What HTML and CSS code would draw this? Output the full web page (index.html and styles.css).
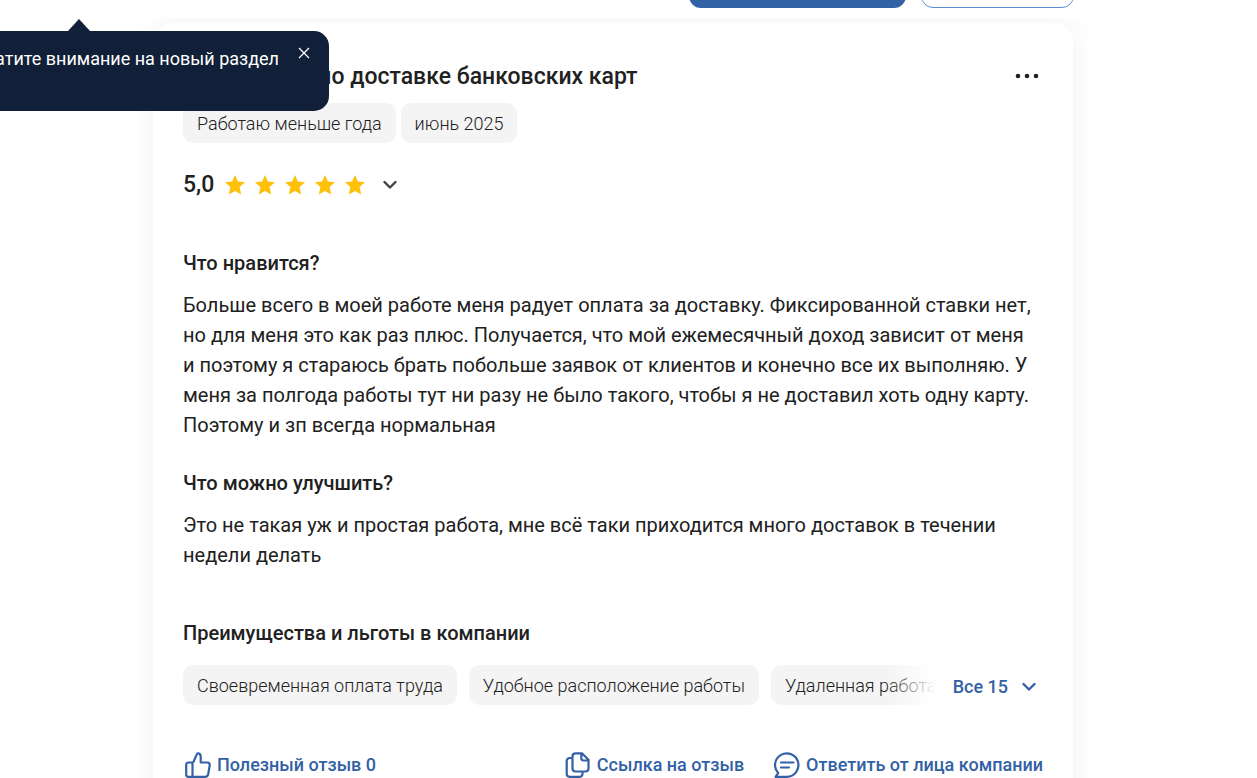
FILE: index.html
```
<!DOCTYPE html>
<html lang="ru">
<head>
<meta charset="UTF-8">
<meta name="viewport" content="width=device-width, initial-scale=1.0">
<title>Отзыв о работе</title>
<link rel="stylesheet" href="styles.css">
</head>
<body>

<div class="page">
<div class="toolbar">
<button class="button button-main" type="button" aria-label="Оставить отзыв"></button>
<button class="button button-outline" type="button" aria-label="Фильтры"></button>
</div>

<main class="reviews">
<article class="card">
<header class="card-header">
<h2 class="card-title">Специалист по доставке банковских карт</h2>
<button class="menu-button" type="button" aria-label="Меню">
<svg width="24" height="6" viewBox="0 0 24 6" fill="currentColor"><circle cx="3" cy="3" r="2.3"/><circle cx="12" cy="3" r="2.3"/><circle cx="21" cy="3" r="2.3"/></svg>
</button>
</header>

<div class="tags">
<span class="tag">Работаю меньше года</span>
<span class="tag">июнь 2025</span>
</div>

<div class="rating">
<span class="rating-value">5,0</span>
<div class="stars">
<svg class="star" viewBox="0 0 20 20"><path d="M10 0l2.9 6.6 7.1.7-5.4 4.7 1.6 7.6-6.2-3.7-6.2 3.7L5.400 12 0 7.3l7.100-.7z"/></svg>
<svg class="star" viewBox="0 0 20 20"><path d="M10 0l2.9 6.6 7.1.7-5.4 4.7 1.6 7.6-6.2-3.7-6.2 3.7L5.400 12 0 7.3l7.100-.7z"/></svg>
<svg class="star" viewBox="0 0 20 20"><path d="M10 0l2.9 6.6 7.1.7-5.4 4.7 1.6 7.6-6.2-3.7-6.2 3.7L5.400 12 0 7.3l7.100-.7z"/></svg>
<svg class="star" viewBox="0 0 20 20"><path d="M10 0l2.9 6.6 7.1.7-5.4 4.7 1.6 7.6-6.2-3.7-6.2 3.7L5.400 12 0 7.3l7.100-.7z"/></svg>
<svg class="star" viewBox="0 0 20 20"><path d="M10 0l2.9 6.6 7.1.7-5.4 4.7 1.6 7.6-6.2-3.7-6.2 3.7L5.400 12 0 7.3l7.100-.7z"/></svg>
</div>
<button class="rating-toggle" type="button" aria-label="Показать оценки">
<svg class="chevron" viewBox="0 0 14 10"><path d="M1.500 2L7 7.500 12.500 2"/></svg>
</button>
</div>

<section class="answer">
<h3>Что нравится?</h3>
<p>Больше всего в моей работе меня радует оплата за доставку. Фиксированной ставки нет, но для меня это как раз плюс. Получается, что мой ежемесячный доход зависит от меня и поэтому я стараюсь брать побольше заявок от клиентов и конечно все их выполняю. У меня за полгода работы тут ни разу не было такого, чтобы я не доставил хоть одну карту. Поэтому и зп всегда нормальная</p>
</section>

<section class="answer">
<h3>Что можно улучшить?</h3>
<p>Это не такая уж и простая работа, мне всё таки приходится много доставок в течении недели делать</p>
</section>

<section class="benefits">
<h3>Преимущества и льготы в компании</h3>
<div class="benefits-row">
<div class="benefits-list">
<span class="tag">Своевременная оплата труда</span>
<span class="tag">Удобное расположение работы</span>
<span class="tag">Удаленная работа</span>
</div>
<button class="show-all" type="button">Все 15
<svg class="chevron" viewBox="0 0 14 10"><path d="M1.500 2L7 7.500 12.500 2"/></svg>
</button>
</div>
</section>

<footer class="actions">
<button class="action action-like" type="button">
<svg class="icon" viewBox="0 0 26 26"><path d="M7.500 10.500h-4a2.300 2.300 0 0 0-2.300 2.300v9.700a2.300 2.300 0 0 0 2.300 2.300h16.700a3 3 0 0 0 3-2.600l1.500-9a2.300 2.300 0 0 0-2.300-2.700h-6.700v-6c0-2-1-3.200-2.600-3.200-.6 0-1 .3-1.200.8L8.500 9.800c-.2.500-.5.700-1 .7zv14.300"/></svg>
Полезный отзыв 0
</button>
<button class="action" type="button">
<svg class="icon" viewBox="0 0 26 26"><path d="M7.500 6H4.700a3 3 0 0 0-3 3v12.800a3 3 0 0 0 3 3h9.800a3 3 0 0 0 3-3v-2.300M10.500 1.300H17l6.500 6.500v8.700a3 3 0 0 1-3 3h-10a3 3 0 0 1-3-3V4.300a3 3 0 0 1 3-3zM16.300 1.300v5a2.200 2.200 0 0 0 2.200 2.200h5"/></svg>
Ссылка на отзыв
</button>
<button class="action" type="button">
<svg class="icon" viewBox="0 0 26 26"><path d="M1.500 24.800l2.700-3.700A11.700 11.700 0 1 1 13 24.800zM7 10.500h12.500M7 15.500h8"/></svg>
Ответить от лица компании
</button>
</footer>
</article>
</main>
</div>

<div class="tooltip" role="dialog">
<p class="tooltip-text">Обратите внимание на новый раздел</p>
<button class="tooltip-close" type="button" aria-label="Закрыть">
<svg width="12" height="12" viewBox="0 0 12 12"><path d="M1 1l10 10M11 1L1 11"/></svg>
</button>
</div>

</body>
</html>
```

FILE: styles.css
```
* {
box-sizing: border-box;
}

body {
margin: 0;
background-color: #fff;
color: #212121;
font-family: Roboto, Arial, sans-serif;
font-size: 20px;
line-height: 30px;
overflow-x: hidden;
}

button {
padding: 0;
border: none;
background: none;
color: inherit;
font: inherit;
cursor: pointer;
}

svg {
display: block;
flex-shrink: 0;
}

h2, h3, p {
margin: 0;
}

.page {
padding-right: 31px;
}

/* Кнопки над списком отзывов */
.toolbar {
display: flex;
justify-content: flex-end;
align-items: flex-end;
gap: 15px;
max-width: 921px;
height: 8px;
margin: 0 auto;
overflow: hidden;
}

.button {
flex-shrink: 0;
height: 50px;
border-radius: 12px;
}

.button-main {
width: 217px;
background-color: #3361a5;
}

.button-outline {
width: 153px;
border: 1px solid #5b8bd8;
}

.reviews {
margin-top: 10px;
padding: 5px 0 0;
overflow: hidden;
}

.card {
max-width: 920px;
margin: 0 auto;
padding: 38px 30px 30px;
border-radius: 20px;
background-color: #fff;
box-shadow: 0 0 30px rgba(0, 0, 0, 0.06);
}

.card-header {
display: flex;
justify-content: space-between;
height: 32px;
padding-right: 4px;
}

.card-title {
font-size: 23px;
font-weight: 500;
line-height: 32px;
}

.menu-button {
height: 30px;
}

.tags {
display: flex;
gap: 5px;
margin-top: 10px;
}

.tag {
flex-shrink: 0;
padding: 6px 14px 4px;
border-radius: 10px;
background-color: #f4f4f4;
color: #212121;
font-size: 18px;
font-weight: 300;
white-space: nowrap;
}

/* Оценка */
.rating {
display: flex;
align-items: center;
margin-top: 27px;
}

.rating-value {
font-size: 23px;
font-weight: 500;
}

.stars {
display: flex;
gap: 10px;
margin-left: 11px;
}

.star {
width: 20px;
height: 20px;
fill: #ffc107;
}

.rating-toggle {
margin-left: 18px;
color: #424242;
}

.chevron {
width: 14px;
height: 10px;
fill: none;
stroke: currentColor;
stroke-width: 2.4;
stroke-linecap: round;
stroke-linejoin: round;
}

h3 {
font-size: 20px;
font-weight: 500;
}

.answer {
margin-top: 28px;
}

.answer p {
margin-top: 12px;
padding-right: 8px;
}

.rating + .answer {
margin-top: 48px;
}

/* Льготы */
.benefits {
margin-top: 48px;
}

.benefits-row {
display: flex;
align-items: center;
gap: 18px;
margin-top: 17px;
padding-right: 7px;
}

.benefits-list {
position: relative;
display: flex;
flex: 1;
gap: 12px;
min-width: 0;
overflow: hidden;
}

.benefits-list::after {
content: "";
position: absolute;
top: 0;
right: 0;
width: 50px;
height: 100%;
background: linear-gradient(to right, rgba(255, 255, 255, 0), #fff);
}

.show-all {
display: flex;
align-items: center;
gap: 14px;
padding-top: 4px;
color: #3361a5;
font-size: 18px;
font-weight: 500;
}

/* Действия с отзывом */
.actions {
display: flex;
gap: 30px;
margin-top: 45px;
padding-left: 2px;
}

.action {
display: flex;
align-items: center;
gap: 6px;
color: #3361a5;
font-size: 18px;
font-weight: 500;
}

.action-like {
margin-right: auto;
}

.icon {
width: 26px;
height: 26px;
fill: none;
stroke: currentColor;
stroke-width: 2.2;
stroke-linecap: round;
stroke-linejoin: round;
}

/* Подсказка поверх карточки */
.tooltip {
position: absolute;
top: 31px;
left: -40px;
display: flex;
justify-content: flex-end;
align-items: flex-start;
gap: 19px;
width: 369px;
height: 80px;
padding: 13px 19px;
border-radius: 15px;
background-color: #121f38;
color: #fff;
font-size: 18px;
}

.tooltip::before {
content: "";
position: absolute;
top: -12px;
left: 108px;
border: solid transparent;
border-width: 0 11px 12px;
border-bottom-color: #121f38;
}

.tooltip-text {
white-space: nowrap;
}

.tooltip-close {
margin-top: 3px;
}

.tooltip-close svg {
fill: none;
stroke: #fff;
stroke-width: 1.3;
}
```
